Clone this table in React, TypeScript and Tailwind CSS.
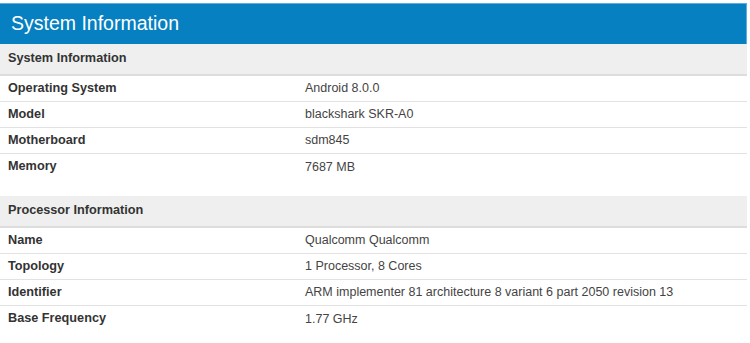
import React from 'react';

type Row = { label: string; value: string };

const systemRows: Row[] = [
  { label: 'Operating System', value: 'Android 8.0.0' },
  { label: 'Model', value: 'blackshark SKR-A0' },
  { label: 'Motherboard', value: 'sdm845' },
  { label: 'Memory', value: '7687 MB' },
];

const processorRows: Row[] = [
  { label: 'Name', value: 'Qualcomm Qualcomm' },
  { label: 'Topology', value: '1 Processor, 8 Cores' },
  { label: 'Identifier', value: 'ARM implementer 81 architecture 8 variant 6 part 2050 revision 13' },
  { label: 'Base Frequency', value: '1.77 GHz' },
];

const Section = ({ title, rows }: { title: string; rows: Row[] }) => (
  <div>
    <div className="h-[32px] flex items-center px-2 bg-[#efefef] border-b-2 border-[#dddddd] text-[12.7px] font-bold text-[#333]">
      {title}
    </div>
    <ul>
      {rows.map((row, i) => (
        <li
          key={row.label}
          className={`h-[26px] flex items-center text-[#333] ${
            i < rows.length - 1 ? 'border-b border-[#e2e2e2]' : ''
          }`}
        >
          <span className="w-[305px] pl-2 font-bold text-[12.7px]">{row.label}</span>
          <span className="text-[#444] text-[12.5px]">{row.value}</span>
        </li>
      ))}
    </ul>
  </div>
);

const App = () => {
  return (
    <div className="w-[750px] h-[343px] bg-white font-['Liberation_Sans',Arial,sans-serif] pt-[3px] pr-[3px]">
      <div className="h-[41px] flex items-center pl-[11px] bg-[#0780c1] border-t border-r border-[#5aaee0] text-white text-[19.5px]">
        System Information
      </div>
      <Section title="System Information" rows={systemRows} />
      <div className="h-[16px]" />
      <Section title="Processor Information" rows={processorRows} />
    </div>
  );
};

export default App;
